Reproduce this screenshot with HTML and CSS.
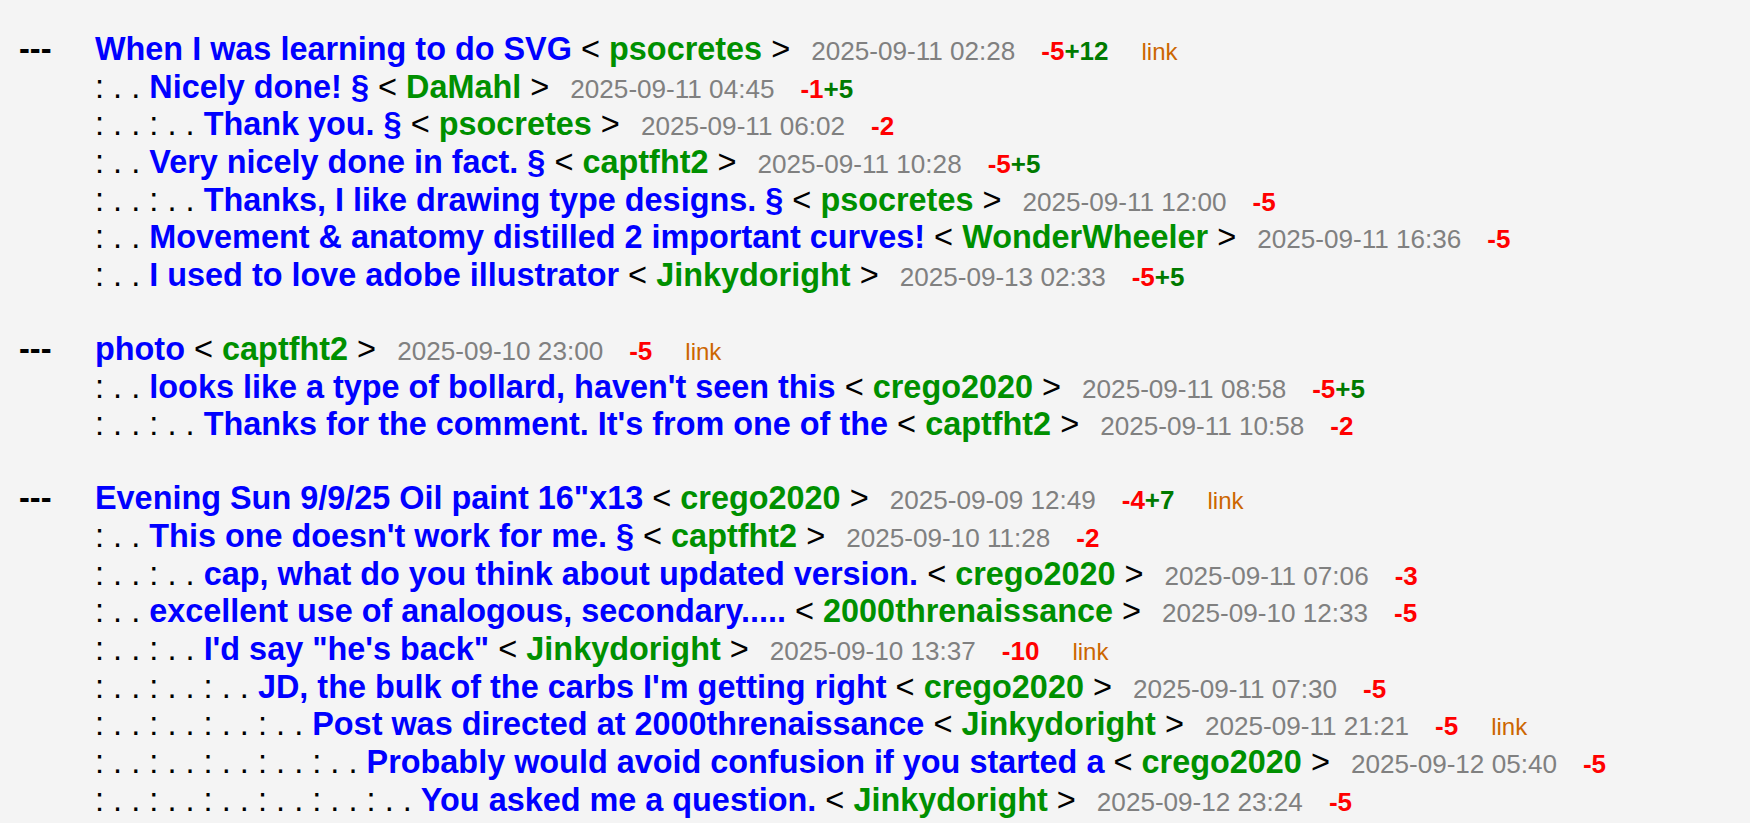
FILE: index.html
```html
<!DOCTYPE html>
<html>
<head>
<meta charset="utf-8">
<title>Threads</title>
<link rel="stylesheet" href="styles.css">
</head>
<body>
<div class="page">
  <div class="group">
    <div class="row"><span class="lead">---</span><span class="body"><a class="t" href="#">When I was learning to do SVG</a> &lt; <a class="u" href="#">psocretes</a> &gt;<span class="d">2025-09-11 02:28</span><span class="s"><span class="neg">-5</span><span class="pos">+12</span></span><a class="lnk" href="#">link</a></span></div>
    <div class="row"><span class="lead"></span><span class="body"><span class="pre">: . . </span><a class="t" href="#">Nicely done! §</a> &lt; <a class="u" href="#">DaMahl</a> &gt;<span class="d">2025-09-11 04:45</span><span class="s"><span class="neg">-1</span><span class="pos">+5</span></span></span></div>
    <div class="row"><span class="lead"></span><span class="body"><span class="pre">: . . : . . </span><a class="t" href="#">Thank you. §</a> &lt; <a class="u" href="#">psocretes</a> &gt;<span class="d">2025-09-11 06:02</span><span class="s"><span class="neg">-2</span></span></span></div>
    <div class="row"><span class="lead"></span><span class="body"><span class="pre">: . . </span><a class="t" href="#">Very nicely done in fact. §</a> &lt; <a class="u" href="#">captfht2</a> &gt;<span class="d">2025-09-11 10:28</span><span class="s"><span class="neg">-5</span><span class="pos">+5</span></span></span></div>
    <div class="row"><span class="lead"></span><span class="body"><span class="pre">: . . : . . </span><a class="t" href="#">Thanks, I like drawing type designs. §</a> &lt; <a class="u" href="#">psocretes</a> &gt;<span class="d">2025-09-11 12:00</span><span class="s"><span class="neg">-5</span></span></span></div>
    <div class="row"><span class="lead"></span><span class="body"><span class="pre">: . . </span><a class="t" href="#">Movement &amp; anatomy distilled 2 important curves!</a> &lt; <a class="u" href="#">WonderWheeler</a> &gt;<span class="d">2025-09-11 16:36</span><span class="s"><span class="neg">-5</span></span></span></div>
    <div class="row"><span class="lead"></span><span class="body"><span class="pre">: . . </span><a class="t" href="#">I used to love adobe illustrator</a> &lt; <a class="u" href="#">Jinkydoright</a> &gt;<span class="d">2025-09-13 02:33</span><span class="s"><span class="neg">-5</span><span class="pos">+5</span></span></span></div>
  </div>
  <div class="group">
    <div class="row"><span class="lead">---</span><span class="body"><a class="t" href="#">photo</a> &lt; <a class="u" href="#">captfht2</a> &gt;<span class="d">2025-09-10 23:00</span><span class="s"><span class="neg">-5</span></span><a class="lnk" href="#">link</a></span></div>
    <div class="row"><span class="lead"></span><span class="body"><span class="pre">: . . </span><a class="t" href="#">looks like a type of bollard, haven't seen this</a> &lt; <a class="u" href="#">crego2020</a> &gt;<span class="d">2025-09-11 08:58</span><span class="s"><span class="neg">-5</span><span class="pos">+5</span></span></span></div>
    <div class="row"><span class="lead"></span><span class="body"><span class="pre">: . . : . . </span><a class="t" href="#">Thanks for the comment. It's from one of the</a> &lt; <a class="u" href="#">captfht2</a> &gt;<span class="d">2025-09-11 10:58</span><span class="s"><span class="neg">-2</span></span></span></div>
  </div>
  <div class="group">
    <div class="row"><span class="lead">---</span><span class="body"><a class="t" href="#">Evening Sun 9/9/25 Oil paint 16"x13</a> &lt; <a class="u" href="#">crego2020</a> &gt;<span class="d">2025-09-09 12:49</span><span class="s"><span class="neg">-4</span><span class="pos">+7</span></span><a class="lnk" href="#">link</a></span></div>
    <div class="row"><span class="lead"></span><span class="body"><span class="pre">: . . </span><a class="t" href="#">This one doesn't work for me. §</a> &lt; <a class="u" href="#">captfht2</a> &gt;<span class="d">2025-09-10 11:28</span><span class="s"><span class="neg">-2</span></span></span></div>
    <div class="row"><span class="lead"></span><span class="body"><span class="pre">: . . : . . </span><a class="t" href="#">cap, what do you think about updated version.</a> &lt; <a class="u" href="#">crego2020</a> &gt;<span class="d">2025-09-11 07:06</span><span class="s"><span class="neg">-3</span></span></span></div>
    <div class="row"><span class="lead"></span><span class="body"><span class="pre">: . . </span><a class="t" href="#">excellent use of analogous, secondary.....</a> &lt; <a class="u" href="#">2000threnaissance</a> &gt;<span class="d">2025-09-10 12:33</span><span class="s"><span class="neg">-5</span></span></span></div>
    <div class="row"><span class="lead"></span><span class="body"><span class="pre">: . . : . . </span><a class="t" href="#">I'd say "he's back"</a> &lt; <a class="u" href="#">Jinkydoright</a> &gt;<span class="d">2025-09-10 13:37</span><span class="s"><span class="neg">-10</span></span><a class="lnk" href="#">link</a></span></div>
    <div class="row"><span class="lead"></span><span class="body"><span class="pre">: . . : . . : . . </span><a class="t" href="#">JD, the bulk of the carbs I'm getting right</a> &lt; <a class="u" href="#">crego2020</a> &gt;<span class="d">2025-09-11 07:30</span><span class="s"><span class="neg">-5</span></span></span></div>
    <div class="row"><span class="lead"></span><span class="body"><span class="pre">: . . : . . : . . : . . </span><a class="t" href="#">Post was directed at 2000threnaissance</a> &lt; <a class="u" href="#">Jinkydoright</a> &gt;<span class="d">2025-09-11 21:21</span><span class="s"><span class="neg">-5</span></span><a class="lnk" href="#">link</a></span></div>
    <div class="row"><span class="lead"></span><span class="body"><span class="pre">: . . : . . : . . : . . : . . </span><a class="t" href="#">Probably would avoid confusion if you started a</a> &lt; <a class="u" href="#">crego2020</a> &gt;<span class="d">2025-09-12 05:40</span><span class="s"><span class="neg">-5</span></span></span></div>
    <div class="row"><span class="lead"></span><span class="body"><span class="pre">: . . : . . : . . : . . : . . : . . </span><a class="t" href="#">You asked me a question.</a> &lt; <a class="u" href="#">Jinkydoright</a> &gt;<span class="d">2025-09-12 23:24</span><span class="s"><span class="neg">-5</span></span></span></div>
  </div>
</div>
</body>
</html>
```

FILE: styles.css
```css
html, body {
  margin: 0;
  padding: 0;
  background: #f4f4f4;
}

body {
  font-family: "Liberation Sans", Arial, Helvetica, sans-serif;
  color: #000000;
}

.page {
  padding: 30px 0 0 0;
  display: flex;
  flex-direction: column;
  gap: 36.4px;
}

.group {
  display: flex;
  flex-direction: column;
}

.row {
  display: flex;
  align-items: baseline;
  height: 37.67px;
  line-height: 37.67px;
  font-size: 32.6px;
  white-space: nowrap;
}

.lead {
  flex: none;
  width: 95px;
  padding-left: 19px;
  box-sizing: border-box;
  font-weight: bold;
}

.body {
  flex: none;
}

.pre {
  color: #000000;
}

.t {
  color: #0000ff;
  font-weight: bold;
  font-size: 32.4px;
  text-decoration: none;
}

.u {
  color: #009000;
  font-weight: bold;
  font-size: 32.4px;
  text-decoration: none;
}

.d {
  color: #808080;
  font-size: 26.1px;
  margin-left: 21px;
}

.s {
  font-weight: bold;
  font-size: 26px;
  margin-left: 26px;
}

.neg {
  color: #ff0000;
}

.pos {
  color: #007a00;
}

.lnk {
  color: #cc6600;
  font-size: 24px;
  margin-left: 33px;
  text-decoration: none;
}
```
